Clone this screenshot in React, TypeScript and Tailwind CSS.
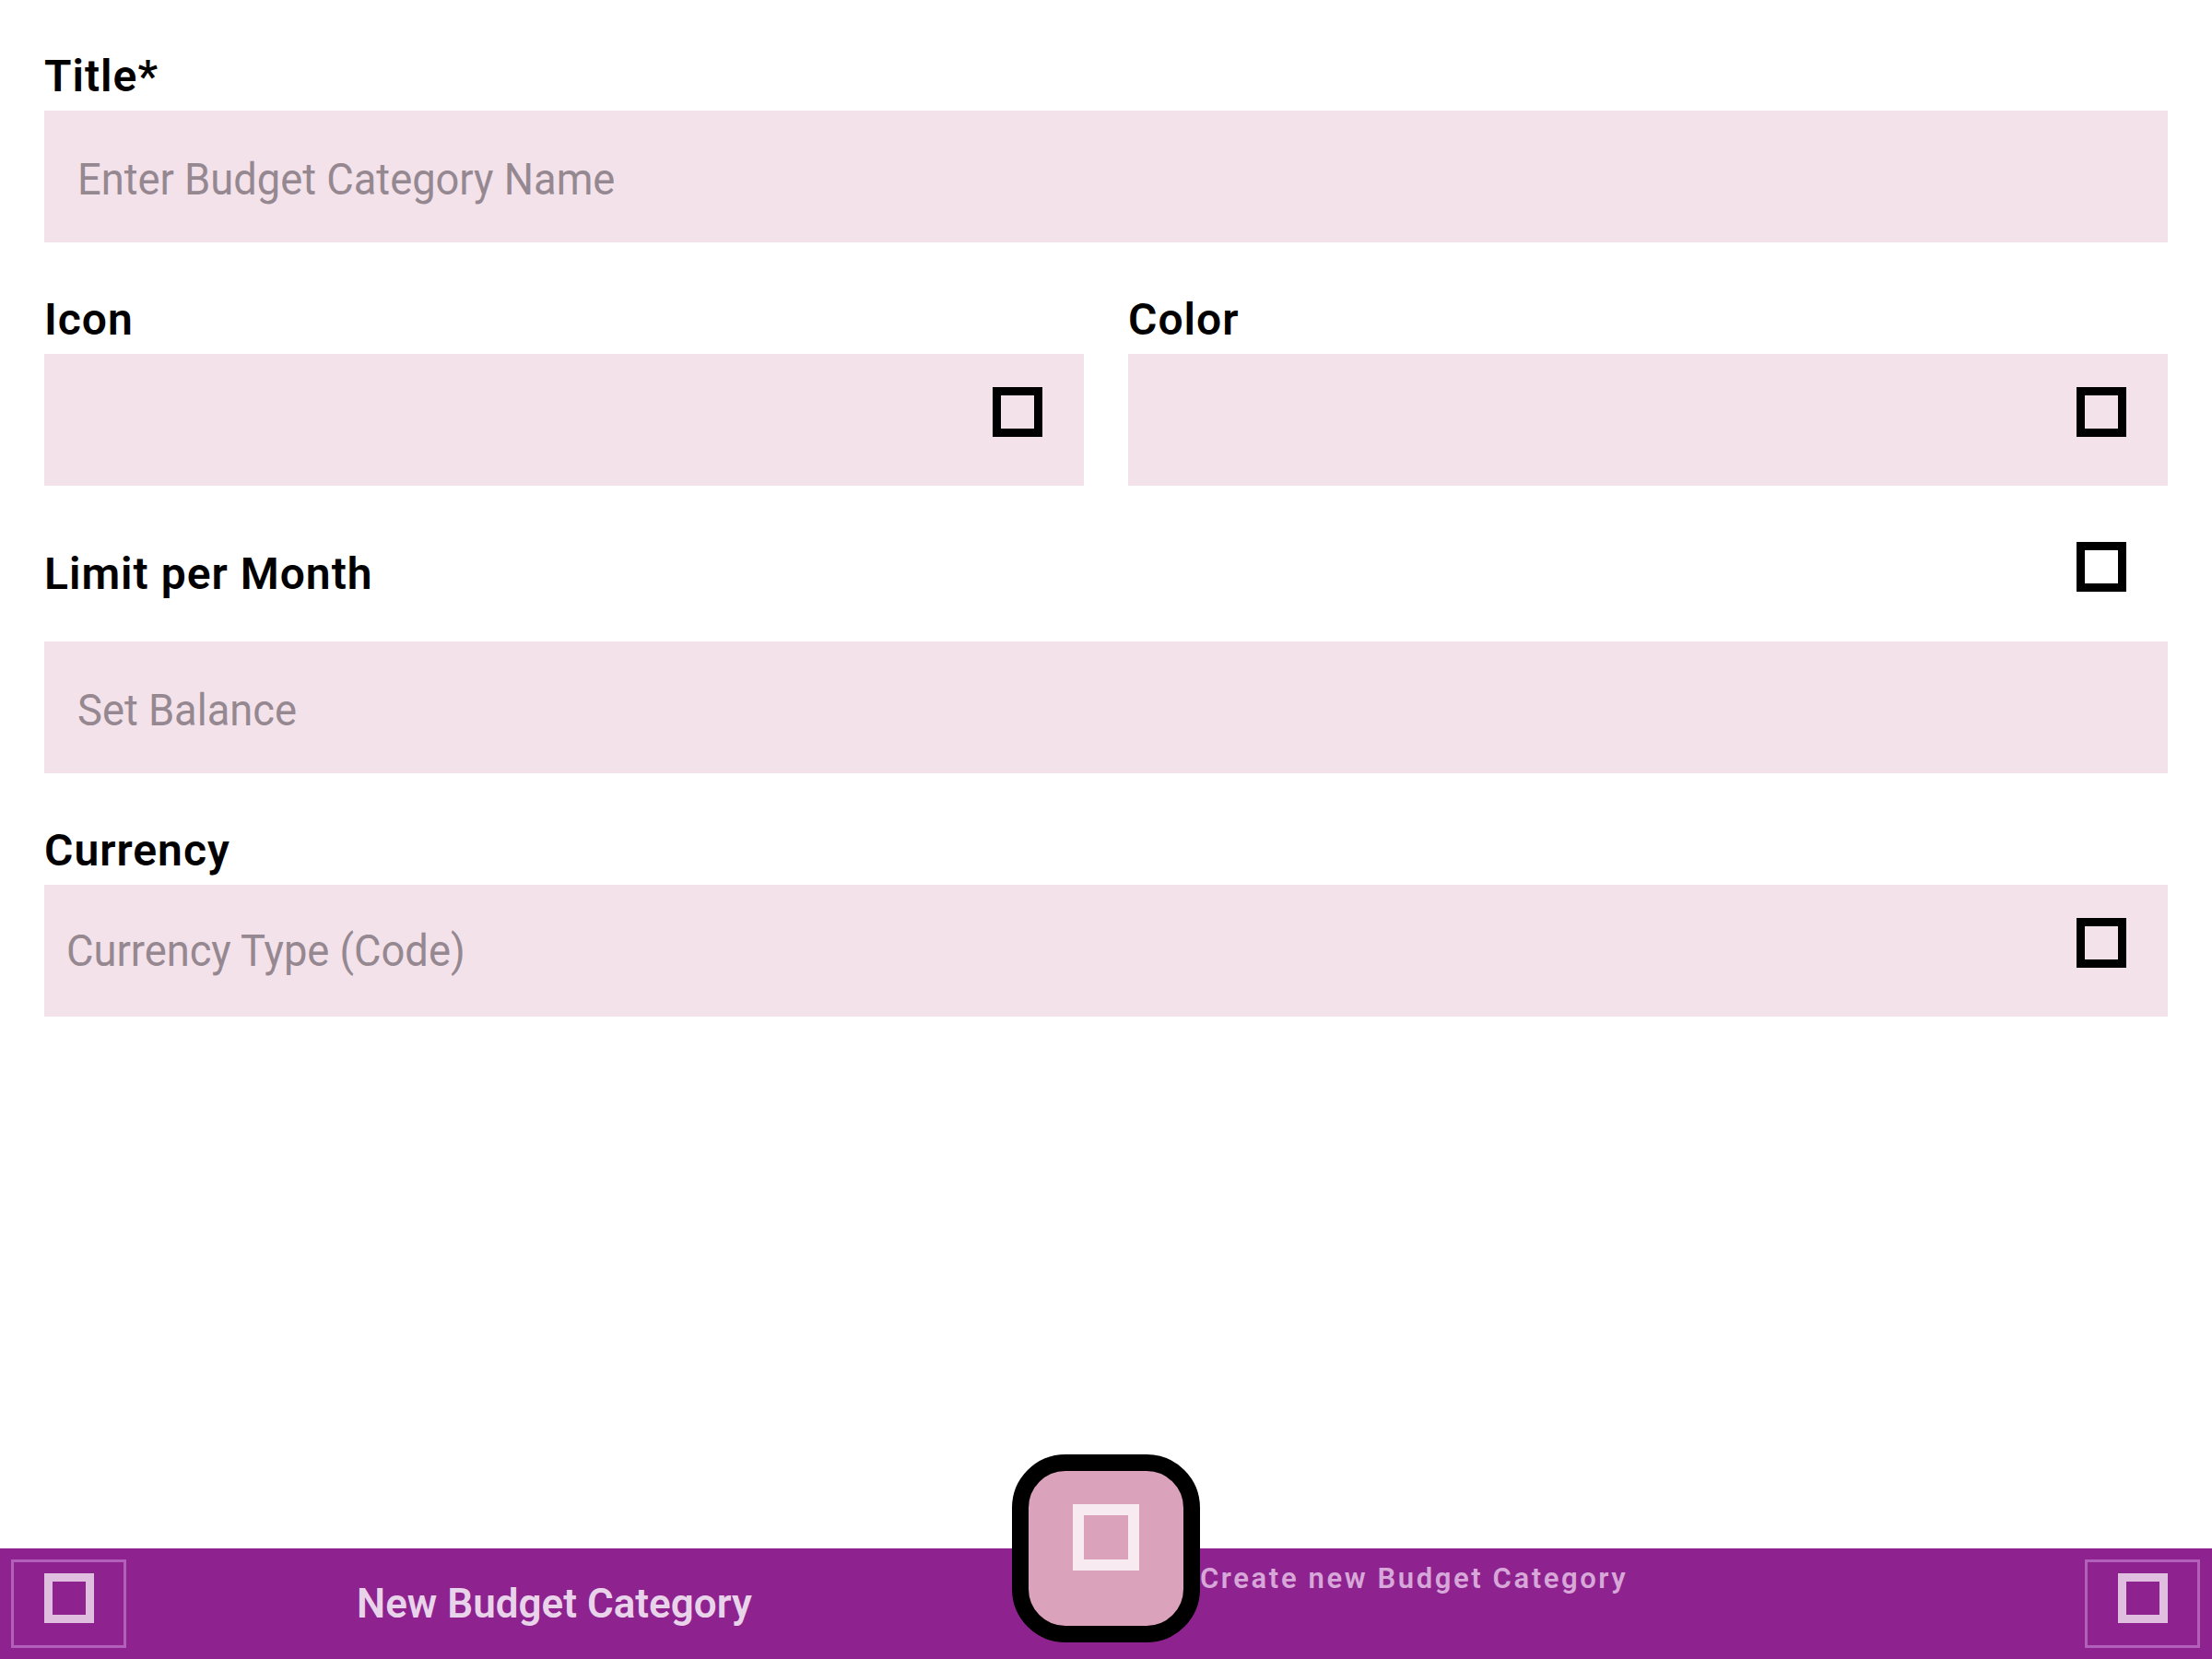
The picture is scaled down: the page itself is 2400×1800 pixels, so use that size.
import React from "react";

const Tofu = ({ size = 54, stroke = 9, color = "#000000", className = "" }: { size?: number; stroke?: number; color?: string; className?: string }) => (
  <svg width={size} height={size} viewBox={`0 0 ${size} ${size}`} className={className}>
    <rect x={stroke / 2} y={stroke / 2} width={size - stroke} height={size - stroke} fill="none" stroke={color} strokeWidth={stroke} />
  </svg>
);

function Label({ children }: { children: React.ReactNode }) {
  return <div className="h-[48px] text-[48px] leading-none font-semibold tracking-[1px] text-black">{children}</div>;
}

function Hint({ children }: { children: React.ReactNode }) {
  return (
    <span className="block origin-left scale-x-[0.943] whitespace-nowrap text-[48px] leading-none text-[#958891]">
      {children}
    </span>
  );
}

function Field({ placeholder, icon, pad = "pl-[36px]" }: { placeholder?: string; icon?: boolean; pad?: string }) {
  return (
    <div className={`h-[143px] bg-[#f3e2ea] flex items-center pr-[45px] ${pad}`}>
      <div className="flex-1">{placeholder && <Hint>{placeholder}</Hint>}</div>
      {icon && <Tofu className="mb-[18px]" />}
    </div>
  );
}

export default function App() {
  return (
    <div className="h-[1800px] w-[2400px] bg-white flex flex-col font-['Roboto',sans-serif]">
      <main className="flex-1 px-[48px] pt-[59px]">
        <Label>Title*</Label>
        <div className="mt-[13px]">
          <div className="h-[143px] bg-[#f3e2ea] flex items-center pl-[36px] pt-[7px]">
            <Hint>Enter Budget Category Name</Hint>
          </div>
        </div>

        <div className="mt-[60px] grid grid-cols-2 gap-[48px]">
          <div>
            <Label>Icon</Label>
            <div className="mt-[13px]">
              <Field icon />
            </div>
          </div>
          <div>
            <Label>Color</Label>
            <div className="mt-[13px]">
              <Field icon />
            </div>
          </div>
        </div>

        <div className="mt-[45px] h-[96px] flex items-center justify-between pr-[45px]">
          <div className="mt-[5px]">
            <Label>Limit per Month</Label>
          </div>
          <Tofu className="mb-[10px]" />
        </div>
        <div className="mt-[28px] h-[143px] bg-[#f3e2ea] flex items-center pl-[36px] pt-[7px]">
          <Hint>Set Balance</Hint>
        </div>

        <div className="mt-[60px]">
          <Label>Currency</Label>
        </div>
        <div className="mt-[13px]">
          <Field placeholder="Currency Type (Code)" icon pad="pl-[24px]" />
        </div>
      </main>

      <footer className="h-[120px] bg-[#8e228e] grid grid-cols-[1fr_204px_1fr]">
        <div className="flex items-center">
          <button className="ml-[12px] w-[125px] h-[96px] border-[3px] border-[#b360bb] flex items-center justify-center">
            <Tofu color="#dfbedf" className="mb-[12px]" />
          </button>
          <span className="ml-[250px] text-[44px] leading-none font-semibold text-[#e9d3ea]">New Budget Category</span>
        </div>
        <div className="-mt-[102px] h-[204px] w-[204px] rounded-[58px] border-[18px] border-black bg-[#dba2bc] flex items-center justify-center">
          <Tofu size={72} stroke={12} color="#f7ebf1" className="mb-[24px]" />
        </div>
        <div className="flex items-start justify-between">
          <span className="mt-[17px] text-[31px] leading-none font-semibold tracking-[2.6px] text-[#d8a7d9]">Create new Budget Category</span>
          <button className="mt-[12px] mr-[13px] w-[125px] h-[96px] border-[3px] border-[#b360bb] flex items-center justify-center">
            <Tofu color="#dfbedf" className="mb-[12px]" />
          </button>
        </div>
      </footer>
    </div>
  );
}
